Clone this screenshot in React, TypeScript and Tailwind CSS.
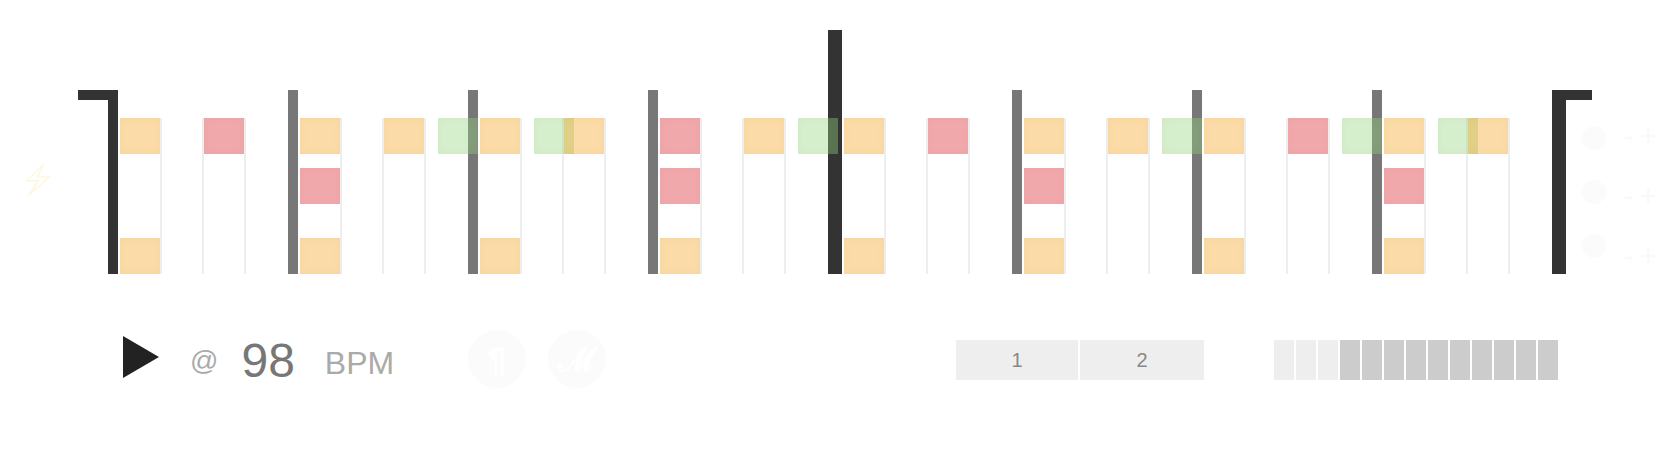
import React from "react";

type Note = "o" | "r" | null;

interface Beat {
    notes: [Note, Note, Note];
    graceClass?: string;
}

const fillClass = {
    o: "bg-[#f5a623]/40 shadow-[inset_0_0_8px_rgba(120,80,0,0.04)]",
    r: "bg-[#d4060f]/35 shadow-[inset_0_0_8px_rgba(120,0,0,0.03)]",
};

// each measure holds two beats, the fifth one opens with the heavy bar line
const measures: Beat[][] = [
    [{ notes: ["o", null, "o"] }, { notes: ["r", null, null] }],
    [{ notes: ["o", "r", "o"] }, { notes: ["o", null, null] }],
    [{ notes: ["o", null, "o"], graceClass: "-left-[42px]" }, { notes: ["o", null, null], graceClass: "-left-[30px]" }],
    [{ notes: ["r", "r", "o"] }, { notes: ["o", null, null] }],
    [{ notes: ["o", null, "o"], graceClass: "-left-[46px]" }, { notes: ["r", null, null] }],
    [{ notes: ["o", "r", "o"] }, { notes: ["o", null, null] }],
    [{ notes: ["o", null, "o"], graceClass: "-left-[42px]" }, { notes: ["r", null, null] }],
    [{ notes: ["o", "r", "o"], graceClass: "-left-[42px]" }, { notes: ["o", null, null], graceClass: "-left-[30px]" }],
];

function BeatColumn({ beat, first }: { beat: Beat; first: boolean }) {
    return (
        <div className={`relative h-[156px] w-[44px] border-x-2 border-r-[#eeeeee] ${first ? "border-l-white" : "border-l-[#eeeeee]"}`}>
            {beat.graceClass && (
                <div className={`absolute top-0 h-[36px] w-[40px] bg-[#96d47d]/40 shadow-[inset_0_0_8px_rgba(0,80,0,0.03)] ${beat.graceClass}`}></div>
            )}
            <div className="relative flex h-full flex-col">
                <div className={`h-[36px] ${beat.notes[0] ? fillClass[beat.notes[0]] : ""}`}></div>
                <div className={`mt-[14px] h-[36px] ${beat.notes[1] ? fillClass[beat.notes[1]] : ""}`}></div>
                <div className={`mt-[34px] h-[36px] ${beat.notes[2] ? fillClass[beat.notes[2]] : ""}`}></div>
            </div>
        </div>
    );
}

function Measure({ beats, index }: { beats: Beat[]; index: number }) {
    return (
        <div className="flex items-end">
            {index === 0 && (
                <div className="flex h-[184px] w-[40px] flex-col items-end">
                    <div className="h-[10px] w-full bg-[#333333]"></div>
                    <div className="w-[10px] flex-1 bg-[#333333]"></div>
                </div>
            )}
            {index === 4 && <div className="h-[244px] w-[14px] bg-[#333333]"></div>}
            {index !== 0 && index !== 4 && <div className="h-[184px] w-[10px] bg-[#777777]"></div>}
            <BeatColumn beat={beats[0]} first />
            <div className="w-[40px]"></div>
            <BeatColumn beat={beats[1]} first={false} />
            <div className="w-[42px]"></div>
        </div>
    );
}

function SideControls() {
    return (
        <div className="ml-[16px] flex h-[184px] shrink-0 text-[#f9f9f9]">
            <div className="flex flex-col gap-[30px] pt-[36px]">
                <div className="h-[24px] w-[24px] rounded-full bg-[#fbfbfb]"></div>
                <div className="h-[24px] w-[24px] rounded-full bg-[#fbfbfb]"></div>
                <div className="h-[24px] w-[24px] rounded-full bg-[#fbfbfb]"></div>
            </div>
            <div className="ml-[18px] flex flex-col pt-[16px] text-[29px] leading-[60px] whitespace-nowrap">
                <div className="flex gap-[6px]"><span>-</span><span>+</span></div>
                <div className="flex gap-[6px]"><span>-</span><span>+</span></div>
                <div className="flex gap-[6px]"><span>-</span><span>+</span></div>
            </div>
        </div>
    );
}

export default function App() {
    return (
        <main className="h-[470px] w-[1664px] overflow-hidden bg-white font-['Liberation_Sans',Arial,sans-serif]">
            {/* Bars */}
            <section className="relative flex h-[274px] items-end pl-[78px]">
                <svg className="absolute left-[24px] top-[162px] h-[36px] w-[28px]" viewBox="24 162 28 36" fill="none" stroke="#fff6e2" strokeWidth="1.5">
                    <path d="M43.6 164 27 180.7h11.6l-10 15 20.7-19H37.5z" />
                </svg>
                {measures.map((beats, i) => (
                    <Measure key={i} beats={beats} index={i} />
                ))}
                <div className="flex h-[184px] w-[14px] flex-col">
                    <div className="h-[10px] w-[40px] shrink-0 bg-[#333333]"></div>
                    <div className="flex-1 bg-[#333333]"></div>
                </div>
                <SideControls />
            </section>

            {/* Transport */}
            <section className="mt-[56px] flex h-[58px] items-center">
                <svg className="mb-[4px] ml-[123px] h-[42px] w-[36px]" viewBox="0 0 36 42">
                    <polygon points="0,0 36,21 0,42" fill="#222222" />
                </svg>
                <div className="ml-[31px] flex w-[278px] items-center">
                    <span className="mt-[3px] text-[28px] leading-none text-[#aaaaaa]">@</span>
                    <span className="ml-[23px] mt-[3px] text-[48px] leading-none text-[#777777]">98</span>
                    <span className="ml-[30px] mt-[7px] text-[32px] leading-none text-[#aaaaaa]">BPM</span>
                </div>
                <div className="flex h-[58px] w-[58px] items-center justify-center rounded-full bg-[#fbfbfb] text-[34px] font-bold text-white">¶</div>
                <div className="ml-[22px] flex h-[58px] w-[58px] items-center justify-center rounded-full bg-[#fbfbfb] font-['DejaVu_Serif',serif] text-[34px] font-bold text-white">ℳ</div>
                <div className="ml-[350px] mt-[2px] flex h-[40px] gap-[2px] text-[20px] text-[#888888]">
                    <div className="flex w-[122px] items-center justify-center bg-[#eeeeee]">1</div>
                    <div className="flex w-[124px] items-center justify-center bg-[#eeeeee]">2</div>
                </div>
                <div className="ml-[70px] mt-[2px] flex h-[40px] gap-[2px]">
                    {Array.from({ length: 13 }).map((_, i) => (
                        <div key={i} className={`w-[20px] ${i < 3 ? "bg-[#eeeeee]" : "bg-[#cccccc]"}`}></div>
                    ))}
                </div>
            </section>
        </main>
    );
}
